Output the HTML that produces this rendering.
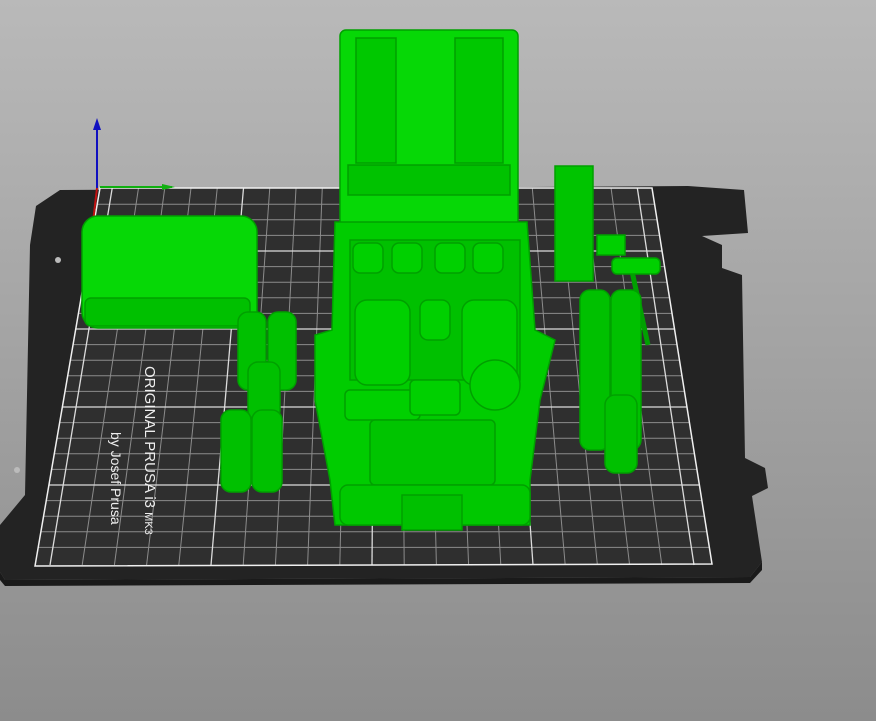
<!DOCTYPE html><html><head><style>html,body{margin:0;width:876px;height:721px;overflow:hidden}body{background:linear-gradient(#b9b9b9,#8c8c8c);font-family:"Liberation Sans",sans-serif}svg{display:block}</style></head><body>
<svg width="876" height="721" viewBox="0 0 876 721" xmlns="http://www.w3.org/2000/svg">
<polygon points="0,572 5,580 750,577 762,562 752,496 768,488 765,468 745,458 742,275 722,268 722,245 702,236 748,233 744,190 688,186 60,190 36,206 30,245 25,495 0,525" fill="#232323"/>
<polygon points="0,572 5,580 750,577 762,562 762,570 750,583 5,586 0,580" fill="#1a1a1a"/>
<polygon points="100,188 652,188 712,564 35,566" fill="#2f2f2f"/>
<g stroke="#8c8c8c" stroke-width="1" id="g"></g>
<g stroke="#dcdcdc" stroke-width="1.3" id="m"></g>
<polygon points="100,188 652,188 712,564 35,566" fill="none" stroke="#f0f0f0" stroke-width="1.5"/>
<circle cx="58" cy="260" r="3" fill="#bbb"/><circle cx="17" cy="470" r="3" fill="#bbb"/>
<text transform="translate(145,366) rotate(90)" fill="#eee" font-size="15">ORIGINAL PRUSA i3 <tspan font-size="11">MK3</tspan></text>
<text transform="translate(111,432) rotate(90)" fill="#eee" font-size="14">by Josef Prusa</text>
<line x1="97" y1="188" x2="97" y2="122" stroke="#1010c0" stroke-width="2"/><polygon points="93,130 97,118 101,130" fill="#1010c0"/>
<line x1="97" y1="188" x2="93" y2="222" stroke="#c01010" stroke-width="2"/>
<line x1="100" y1="187" x2="172" y2="187" stroke="#10b010" stroke-width="2"/><polygon points="162,184 175,187 162,190" fill="#10b010"/>
<g fill="#00d000" stroke="#00a000" stroke-width="1.5">
<rect x="82" y="216" width="175" height="112" rx="16" fill="#06d806"/>
<rect x="85" y="298" width="165" height="28" rx="6" fill="#00c000"/>
<rect x="340" y="30" width="178" height="196" rx="6" fill="#06d806"/>
<rect x="356" y="38" width="40" height="125" fill="#00c800"/><rect x="455" y="38" width="48" height="125" fill="#00c800"/>
<rect x="348" y="165" width="162" height="30" fill="#00c200"/>
<path d="M335 222 L527 222 L535 330 L555 340 L540 400 L530 480 L530 525 L335 525 L330 480 L315 400 L315 335 L332 330 Z" fill="#00cc00"/>
<rect x="350" y="240" width="170" height="140" fill="#00c000"/>
<rect x="353" y="243" width="30" height="30" rx="7"/><rect x="392" y="243" width="30" height="30" rx="7"/><rect x="435" y="243" width="30" height="30" rx="7"/><rect x="473" y="243" width="30" height="30" rx="7"/>
<rect x="355" y="300" width="55" height="85" rx="12"/><rect x="420" y="300" width="30" height="40" rx="8"/><rect x="462" y="300" width="55" height="85" rx="12"/>
<rect x="345" y="390" width="75" height="30" rx="5"/><rect x="410" y="380" width="50" height="35" rx="5"/><circle cx="495" cy="385" r="25"/>
<rect x="370" y="420" width="125" height="65" rx="5" fill="#00c400"/>
<rect x="340" y="485" width="190" height="40" rx="8" fill="#00c800"/>
<rect x="402" y="495" width="60" height="35" fill="#00c000"/>
<rect x="555" y="166" width="38" height="115" fill="#00c400"/><rect x="597" y="235" width="28" height="20"/>
<line x1="630" y1="262" x2="648" y2="345" stroke-width="5"/><rect x="612" y="258" width="48" height="16" rx="5"/>
<g fill="#00c000"><rect x="238" y="312" width="28" height="78" rx="10"/><rect x="268" y="312" width="28" height="78" rx="10"/>
<rect x="248" y="362" width="32" height="58" rx="10"/>
<rect x="221" y="410" width="30" height="82" rx="10"/><rect x="252" y="410" width="30" height="82" rx="10"/>
<rect x="580" y="290" width="30" height="160" rx="10"/><rect x="611" y="290" width="30" height="160" rx="10"/>
<rect x="605" y="395" width="32" height="78" rx="10"/></g>
</g>
<script>
var g=document.getElementById('g'),m=document.getElementById('m'),ns="http://www.w3.org/2000/svg";
function L(p,a,b,c,d){var l=document.createElementNS(ns,'line');l.setAttribute('x1',a);l.setAttribute('y1',b);l.setAttribute('x2',c);l.setAttribute('y2',d);p.appendChild(l);}
for(var k=-5;k<=15;k++){var bx=211+k*32.2;if(bx<=36||bx>=711)continue;var tx=100+(bx-35)*552/677;L(k%5==0?m:g,tx,188,bx,565);}
for(var j=1;j<24;j++){var y=563-j*15.6;if(y<=189)break;var t=(y-188)/377;var xl=100-65*t,xr=652+60*t;L(j%5==0?m:g,xl,y,xr,y);}
</script>
</svg></body></html>
